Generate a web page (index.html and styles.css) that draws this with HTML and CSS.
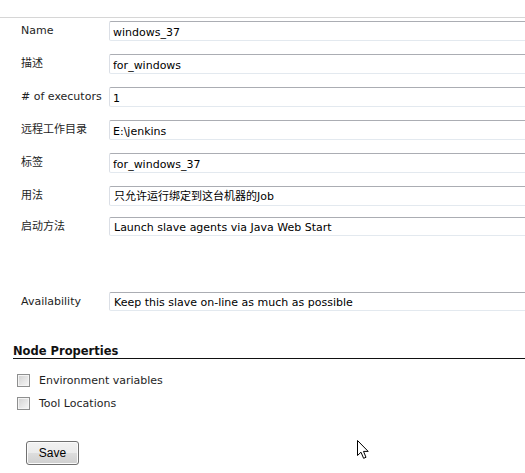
FILE: index.html
```html
<!DOCTYPE html>
<html>
<head>
<meta charset="utf-8">
<link rel="stylesheet" href="styles.css">
</head>
<body>
<div class="page">
  <div class="topbar"></div>
  <form class="node-form">
    <div class="fields">
      <div class="row"><label class="label">Name</label><input class="field" type="text" value="windows_37"></div>
      <div class="row"><label class="label">描述</label><input class="field" type="text" value="for_windows"></div>
      <div class="row"><label class="label"># of executors</label><input class="field" type="text" value="1"></div>
      <div class="row"><label class="label">远程工作目录</label><input class="field" type="text" value="E:\jenkins"></div>
      <div class="row"><label class="label">标签</label><input class="field" type="text" value="for_windows_37"></div>
      <div class="row"><label class="label">用法</label><div class="field select">只允许运行绑定到这台机器的Job</div></div>
      <div class="row row-tight"><label class="label">启动方法</label><div class="field select short">Launch slave agents via Java Web Start</div></div>
      <div class="launcher-config"></div>
      <div class="row"><label class="label">Availability</label><div class="field select short">Keep this slave on-line as much as possible</div></div>
    </div>

    <div class="section">
      <div class="section-title">Node Properties</div>
      <div class="checks">
        <label class="check"><span class="box"></span>Environment variables</label>
        <label class="check"><span class="box"></span>Tool Locations</label>
      </div>
    </div>

    <div class="actions">
      <button type="button" class="save">Save</button>
    </div>
  </form>
  <svg class="cursor" width="14" height="20" viewBox="0 0 14 20">
    <path d="M0.5 0.5 L0.5 15.5 L4 12.2 L6.6 18.3 L9 17.3 L6.5 11.4 L11.2 11.4 Z" fill="#ffffff" stroke="#000000" stroke-width="1" stroke-linejoin="miter"/>
  </svg>
</div>
</body>
</html>
```
FILE: styles.css
```css
html, body {
  margin: 0;
  padding: 0;
  overflow: hidden;
  background: #ffffff;
}

.page {
  position: relative;
  width: 525px;
  height: 473px;
  overflow: hidden;
  font-family: "DejaVu Sans", "Noto Sans CJK SC", sans-serif;
  font-size: 11px;
  color: #1e1e1e;
}

.topbar {
  height: 17px;
  border-bottom: 1px solid #d6d6d6;
}

.node-form {
  margin: 0;
}

.fields {
  display: flex;
  flex-direction: column;
  gap: 13px;
  margin-top: 3px;
  padding-left: 21px;
}

.row {
  display: flex;
  align-items: flex-start;
}

.row-tight {
  margin-top: -2px;
}

.label {
  width: 88px;
  flex: none;
  padding-top: 3px;
  line-height: 13px;
  white-space: nowrap;
}

.field {
  box-sizing: border-box;
  flex: none;
  width: 440px;
  height: 20px;
  margin: 0;
  padding: 2px 3px 0 3px;
  font-family: "DejaVu Sans", "Noto Sans CJK SC", sans-serif;
  font-size: 11px;
  color: #000000;
  background: #ffffff;
  border-style: solid;
  border-width: 1px;
  border-color: #abadb3 #e2e3ea #e3e9ef #dbdfe6;
  border-radius: 2px 0 0 2px;
  outline: none;
}

.select {
  line-height: 17px;
  padding-top: 1px;
  padding-left: 4px;
  white-space: nowrap;
}

.select.short {
  height: 19px;
  line-height: 16px;
  padding-top: 2px;
}

.launcher-config {
  height: 30px;
}

.section {
  margin: 33px 0 0 13px;
}

.section-title {
  font-weight: bold;
  font-size: 11.5px;
  line-height: 14px;
  color: #111111;
  border-bottom: 1px solid #111111;
}

.checks {
  display: flex;
  flex-direction: column;
  margin-top: 10px;
}

.check {
  display: flex;
  align-items: center;
  height: 23px;
  padding-left: 4px;
  gap: 9px;
}

.box {
  box-sizing: border-box;
  width: 13px;
  height: 13px;
  border: 1px solid #8e8f8f;
  background: linear-gradient(135deg, #d0d0d0 0%, #e6e6e6 55%, #f7f7f7 100%);
  box-shadow: inset 0 0 0 1px #f4f4f4;
}

.actions {
  margin: 26px 0 0 26px;
}

.save {
  box-sizing: border-box;
  width: 53px;
  height: 24px;
  padding: 0;
  font-family: "Liberation Sans", Arial, sans-serif;
  font-size: 12px;
  color: #000000;
  border: 1px solid #707070;
  border-radius: 3px;
  background: linear-gradient(#f2f2f2 0%, #ebebeb 50%, #dddddd 51%, #cfcfcf 100%);
  box-shadow: inset 0 0 0 1px #fbfbfb;
}

.cursor {
  position: absolute;
  left: 357px;
  top: 440px;
}
```
